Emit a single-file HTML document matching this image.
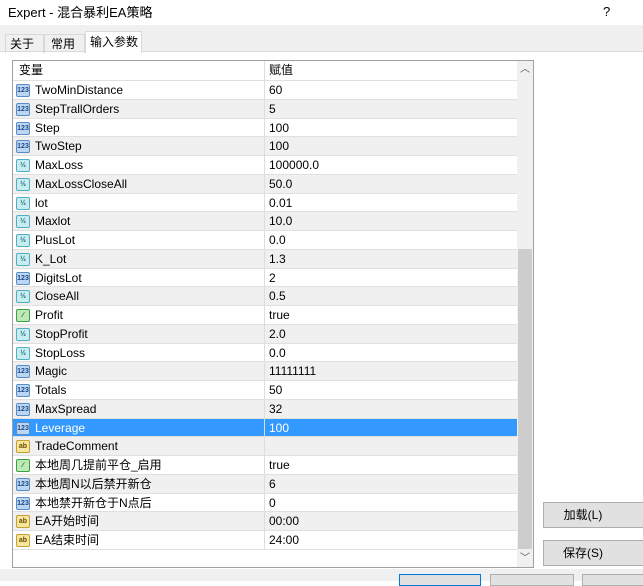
<!DOCTYPE html><html><head><meta charset="utf-8"><style>
*{margin:0;padding:0;box-sizing:border-box}
body{width:643px;height:581px;overflow:hidden;background:#fff;font-family:"Liberation Sans","Noto Sans CJK SC",sans-serif;font-size:12px;line-height:15px;color:#000;position:relative;white-space:nowrap}
.a{position:absolute}
.row{position:absolute;left:13px;width:504px;height:18.75px;border-bottom:1px solid #e0e0e0}
.row .n{position:absolute;left:22px;top:2px;line-height:15px}
.row .v{position:absolute;left:256px;top:2px;line-height:15px}
.row .d{position:absolute;left:251px;top:0;bottom:0;border-left:1px solid #ddd}
.ic{position:absolute;left:3px;top:3px;width:14px;height:13px;border-radius:2px;font-size:7px;line-height:11px;text-align:center;font-weight:bold}
.i1{background:#bcd6f2;border:1px solid #5a8cc8;color:#1c4a8a}
.i2{background:#c8ecf0;border:1px solid #4fb0c0;color:#1a6a80}
.ib{background:#f5e7a0;border:1px solid #c8a030;color:#6a4a00}
.ig{background:#bfe8b8;border:1px solid #3aa040;color:#106010}
.g{background:#f0f0f0}
.sel{background:#3399ff;color:#fff}
.btn{position:absolute;background:#e1e1e1;border:1px solid #adadad;text-align:center;line-height:24px}
</style></head><body>
<div class="a" style="left:8px;top:5px;font-size:13px">Expert - 混合暴利EA策略</div>
<div class="a" style="left:603px;top:4px;font-size:13px">?</div>
<div class="a" style="left:0;top:25px;width:643px;height:27px;background:#f0f0f0;border-bottom:1px solid #d9d9d9"></div>
<div class="a" style="left:5px;top:34px;width:39px;height:19px;border:1px solid #d9d9d9;border-bottom:none;padding:2px 4px">关于</div>
<div class="a" style="left:44px;top:34px;width:41px;height:19px;border:1px solid #d9d9d9;border-bottom:none;padding:2px 6px">常用</div>
<div class="a" style="left:85px;top:31px;width:57px;height:22px;background:#fff;border:1px solid #d9d9d9;border-bottom:none;padding:3px 4px">输入参数</div>
<div class="a" style="left:0;top:569px;width:643px;height:12px;background:#f0f0f0"></div>
<div class="a" style="left:12px;top:60px;width:522px;height:508px;border:1px solid #a0a0a0;background:#fff"></div>
<div class="a" style="left:13px;top:61px;width:504px;height:20px;border-bottom:1px solid #e0e0e0"><span class="a" style="left:6px;top:2px">变量</span><span class="a" style="left:256px;top:2px">赋值</span><span class="a" style="left:251px;top:0;height:20px;border-left:1px solid #ddd"></span></div>
<div class="a" style="left:517px;top:61px;width:16px;height:506px;background:#f0f0f0"></div>
<div class="a" style="left:518px;top:249px;width:14px;height:300px;background:#cdcdcd"></div>
<div class="a" style="left:520px;top:62px;font-size:10px;color:#555">︿</div>
<div class="a" style="left:520px;top:551px;font-size:10px;color:#555">﹀</div>
<div id="rows"></div>
<div class="btn" style="left:543px;top:502px;width:110px;height:26px;padding-right:30px">加载(L)</div>
<div class="btn" style="left:543px;top:540px;width:110px;height:26px;padding-right:30px">保存(S)</div>
<div class="btn" style="left:399px;top:574px;width:82px;height:12px;border-color:#0078d7"></div>
<div class="btn" style="left:490px;top:574px;width:84px;height:12px"></div>
<div class="btn" style="left:582px;top:574px;width:70px;height:12px"></div>
<script>
var d=[["i1","TwoMinDistance","60"],["i1","StepTrallOrders","5"],["i1","Step","100"],["i1","TwoStep","100"],["i2","MaxLoss","100000.0"],["i2","MaxLossCloseAll","50.0"],["i2","lot","0.01"],["i2","Maxlot","10.0"],["i2","PlusLot","0.0"],["i2","K_Lot","1.3"],["i1","DigitsLot","2"],["i2","CloseAll","0.5"],["ig","Profit","true"],["i2","StopProfit","2.0"],["i2","StopLoss","0.0"],["i1","Magic","11111111"],["i1","Totals","50"],["i1","MaxSpread","32"],["i1","Leverage","100"],["ib","TradeComment",""],["ig","本地周几提前平仓_启用","true"],["i1","本地周N以后禁开新仓","6"],["i1","本地禁开新仓于N点后","0"],["ib","EA开始时间","00:00"],["ib","EA结束时间","24:00"]];
var h="";d.forEach(function(r,i){var c=i==18?"sel":(i%2?"g":"");var t={i1:"123",i2:"½",ib:"ab",ig:"∕"}[r[0]];
h+='<div class="row '+c+'" style="top:'+(81+i*18.75)+'px"><div class="ic '+r[0]+'">'+t+'</div><span class="n">'+r[1]+'</span><span class="d"></span><span class="v">'+r[2]+'</span></div>'});
document.getElementById("rows").innerHTML=h;
</script>
</body></html>
